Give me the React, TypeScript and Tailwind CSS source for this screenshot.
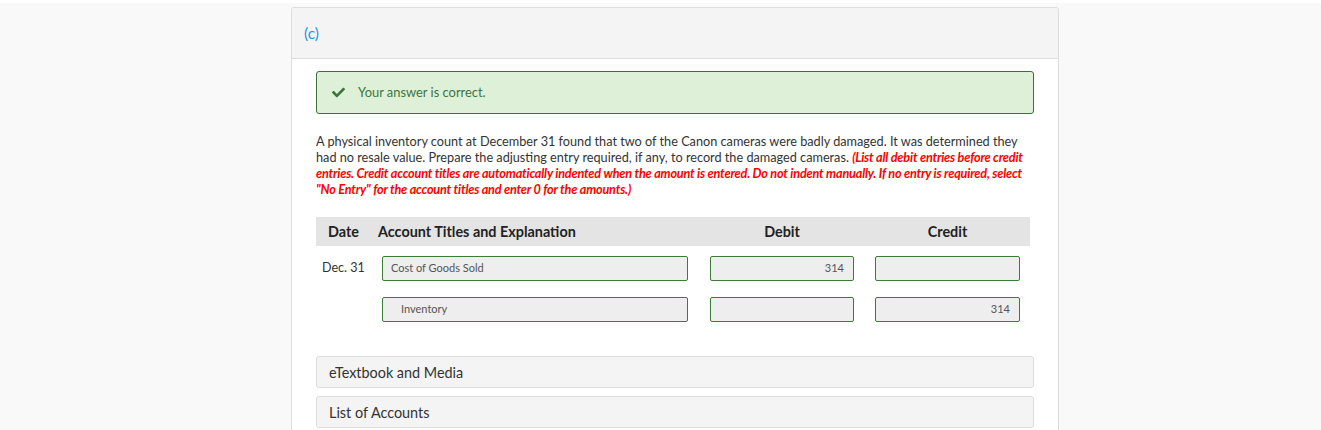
import { FaCheck } from "react-icons/fa";

const lato = { fontFamily: "Lato, 'Open Sans', sans-serif" };

function Field({ value, align = "left", indent = false, className = "" }: { value?: string; align?: "left" | "right"; indent?: boolean; className?: string }) {
  return (
    <div
      className={`h-[25px] border border-[#3a7d34] rounded-[2px] bg-[#eeeeee] flex items-center text-[11px] text-[#555] ${
        align === "right" ? "justify-end pr-[9px]" : indent ? "pl-[18px]" : "pl-[8px]"
      } ${className}`}
    >
      {value}
    </div>
  );
}

export default function App() {
  return (
    <div className="min-h-screen bg-[#f9f9f9] text-[#333]" style={lato}>
      <div className="h-[3px] bg-white" />
      <div className="pt-[4px]">
        <div className="ml-[291px] w-[768px] border border-[#dddddd] rounded-[3px] bg-white h-[430px] overflow-hidden">
          {/* Part header */}
          <div className="h-[51px] bg-[#f4f4f4] border-b border-[#dddddd] flex items-center px-[12px] pt-[2px]">
            <span className="text-[15.5px] text-[#1b9ae0]">(c)</span>
          </div>

          <div className="pl-[24px] pr-[24px] pt-[12px]">
            {/* Success alert */}
            <div className="h-[43px] border border-[#3f6e3c] rounded-[3px] bg-[#dff0d8] flex items-center pl-[15px]">
              <FaCheck className="text-[#3c763d] text-[13px]" />
              <span className="ml-[13px] text-[12.9px] text-[#3c763d]">Your answer is correct.</span>
            </div>

            {/* Question */}
            <p className="mt-[19px] w-[716px] text-[12.7px] leading-[16px] text-[#333]">
              A physical inventory count at December 31 found that two of the Canon cameras were badly damaged. It was determined they had no resale value. Prepare the adjusting entry required, if any, to record the damaged cameras.{" "}
              <span className="text-[#f00] font-bold italic tracking-[-0.2px]">
                (List all debit entries before credit entries. Credit account titles are automatically indented when the amount is entered. Do not indent manually. If no entry is required, select "No Entry" for the account titles and enter 0 for the amounts.)
              </span>
            </p>

            {/* Journal table */}
            <div className="mt-[20px] w-[714px]">
              <div className="h-[29px] bg-[#e4e4e4] grid grid-cols-[56px_327px_166px_165px] items-center text-[14.4px] font-bold text-[#222]">
                <div className="pl-[12px]">Date</div>
                <div className="pl-[6px]">Account Titles and Explanation</div>
                <div className="text-center">Debit</div>
                <div className="text-center">Credit</div>
              </div>

              <div className="grid grid-cols-[56px_327px_166px_165px] items-center pt-[10px]">
                <div className="pl-[6px] text-[12.5px] text-[#333]">Dec. 31</div>
                <div className="pl-[10px] pr-[11px]">
                  <Field value="Cost of Goods Sold" />
                </div>
                <div className="px-[11px]">
                  <Field value="314" align="right" />
                </div>
                <div className="px-[10px] pr-[10px]">
                  <Field />
                </div>
              </div>

              <div className="grid grid-cols-[56px_327px_166px_165px] items-center pt-[16px]">
                <div />
                <div className="pl-[10px] pr-[11px]">
                  <Field value="Inventory" indent />
                </div>
                <div className="px-[11px]">
                  <Field />
                </div>
                <div className="px-[10px] pr-[10px]">
                  <Field value="314" align="right" />
                </div>
              </div>
            </div>

            {/* Collapsible sections */}
            <div className="mt-[34px] flex flex-col gap-[8px] w-[718px]">
              <div className="h-[32px] bg-[#f4f4f4] border border-[#dddddd] rounded-[3px] flex items-center pl-[12px] pt-[2px] text-[14.4px] text-[#333]">
                eTextbook and Media
              </div>
              <div className="h-[32px] bg-[#f4f4f4] border border-[#dddddd] rounded-[3px] flex items-center pl-[12px] pt-[2px] text-[14.4px] text-[#333]">
                List of Accounts
              </div>
            </div>
          </div>
        </div>
      </div>
    </div>
  );
}
